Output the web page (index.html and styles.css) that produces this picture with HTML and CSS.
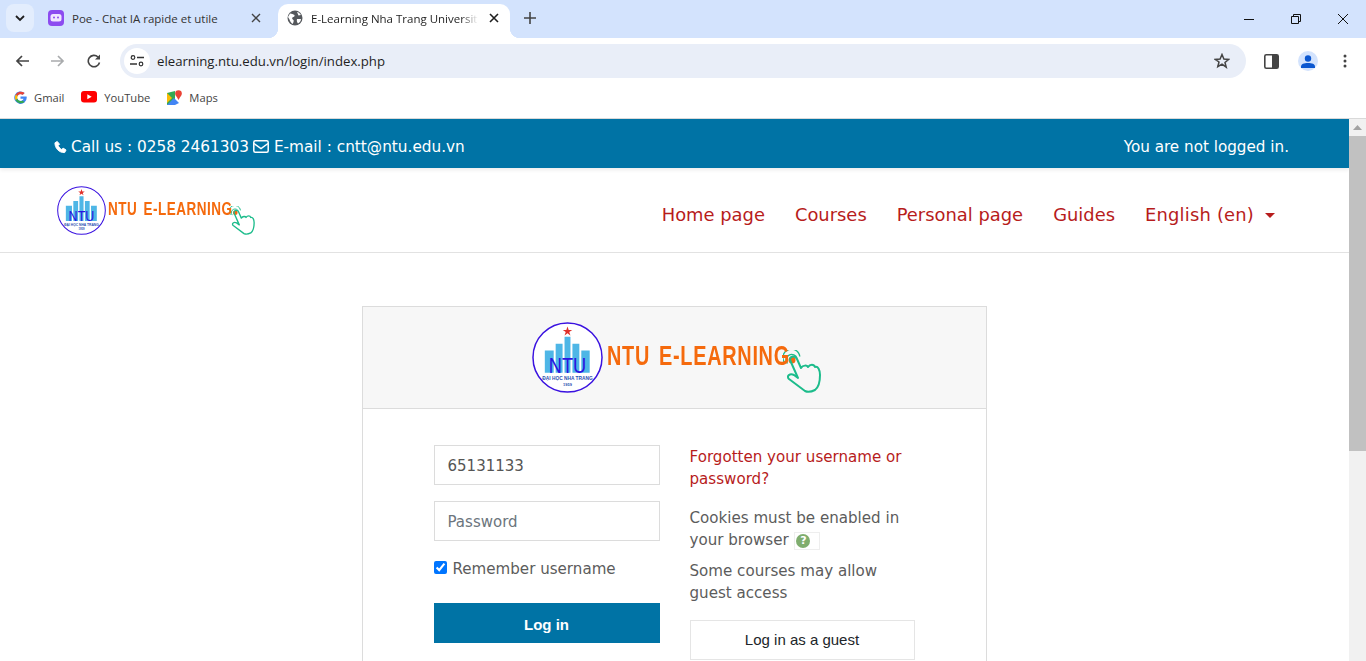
FILE: index.html
```html
<!DOCTYPE html>
<html lang="en">
<head>
    <meta charset="UTF-8">
    <title>E-Learning Nha Trang University</title>
    <link rel="stylesheet" href="styles.css">
</head>
<body>
    <svg width="0" height="0" class="defs">
        <symbol id="hand" viewBox="0 0 38 43">
            <circle cx="9" cy="10" r="3.500" fill="#f26a12" />
            <path d="M4.500 13.500a5.500 5.500 0 1 1 9.500-5M1.800 13a8.500 8.500 0 1 1 15-6.500" fill="none" stroke="#1cbc8b" stroke-width="1.400" />
            <path d="M7 10C7 6 12 5 14 9l4 9c2-3 6-3 7-1 2-3 6-3 7 0 3-1 5 3 5 8 0 8-1 12-5 15-4 2-8 2-10 1L6 29c-3-3 1-6 5-4l4 3z" fill="none" stroke="#1cbc8b" stroke-width="2" stroke-linejoin="round" />
        </symbol>
    </svg>

    <div class="tabstrip">
        <div class="tab-search">
            <svg width="10" height="7" viewBox="0 0 10 7"><path d="M1 1l4 4 4-4" fill="none" stroke="#1f1f1f" stroke-width="1.800" /></svg>
        </div>
        <div class="tab">
            <svg class="favicon" width="16" height="16" viewBox="0 0 16 16">
                <rect width="16" height="16" rx="4" fill="#8c4bf0" />
                <rect x="2.500" y="4" width="11" height="7.500" rx="2.500" fill="#f0e6ff" />
                <circle cx="6" cy="7.500" r="1" fill="#8c4bf0" />
                <circle cx="10" cy="7.500" r="1" fill="#8c4bf0" />
            </svg>
            <span class="tab-title">Poe - Chat IA rapide et utile</span>
            <svg class="tab-close" width="10" height="10" viewBox="0 0 10 10"><path d="M1 1l8 8M9 1l-8 8" stroke="#444" stroke-width="1.400" /></svg>
        </div>
        <div class="tab tab-active">
            <svg class="favicon" width="16" height="16" viewBox="0 0 16 16">
                <circle cx="8" cy="8" r="7.500" fill="#55585c" />
                <path d="M3 3.500c2 0 3 1 4.500 1.500.5 1.500-1 2-2 2.500-1 .5 0 2 1 2.500.5 1 0 2.500-1 4-1.500-1-2.500-3-3-4.500L1 7zM10 9h4c0 2-1.500 3.500-3 4.500-1-1-1.500-3-1-4.500zM10 2c1.500 0 3 1.500 4 3l-2.500.5z" fill="#fff" />
            </svg>
            <span class="tab-title tab-fade">E-Learning Nha Trang University</span>
            <svg class="tab-close" width="10" height="10" viewBox="0 0 10 10"><path d="M1 1l8 8M9 1l-8 8" stroke="#1f1f1f" stroke-width="1.600" /></svg>
        </div>
        <svg class="new-tab" width="12" height="12" viewBox="0 0 12 12"><path d="M6 0v12M0 6h12" stroke="#444" stroke-width="1.600" /></svg>
        <div class="window-btns">
            <svg width="10" height="10" viewBox="0 0 10 10"><path d="M0 5.500h10" stroke="#111" /></svg>
            <svg width="10" height="10" viewBox="0 0 10 10"><path d="M.500 2.500h7v7h-7zM2.500 2.500v-2h7v7h-2" fill="none" stroke="#111" /></svg>
            <svg width="10" height="10" viewBox="0 0 10 10"><path d="M0 0l10 10M10 0L0 10" stroke="#111" /></svg>
        </div>
    </div>

    <div class="toolbar">
        <svg class="nav-icon" width="14" height="12" viewBox="0 0 14 12"><path d="M14 6H2M7 1L2 6l5 5" fill="none" stroke="#444" stroke-width="1.700" /></svg>
        <svg class="nav-icon" width="14" height="12" viewBox="0 0 14 12"><path d="M0 6h12M7 1l5 5-5 5" fill="none" stroke="#a9abad" stroke-width="1.700" /></svg>
        <svg class="nav-icon" width="14" height="14" viewBox="0 0 14 14"><path d="M12.500 8.500A5.700 5.700 0 1 1 11 3" fill="none" stroke="#444" stroke-width="1.600" /><path d="M13 .500v5H8z" fill="#444" /></svg>
        <div class="omnibox">
            <div class="site-info">
                <svg width="14" height="12" viewBox="0 0 14 12"><circle cx="3" cy="2.500" r="1.800" fill="none" stroke="#333" stroke-width="1.200" /><path d="M7 2.500h7M0 9h7" stroke="#333" stroke-width="1.500" /><circle cx="11" cy="9" r="1.800" fill="none" stroke="#333" stroke-width="1.200" /></svg>
            </div>
            <span class="url">elearning.ntu.edu.vn/login/index.php</span>
            <svg class="star" width="16" height="16" viewBox="0 0 16 16"><path d="M8 1.500l1.900 4.500 4.800.4-3.700 3.100 1.200 4.700L8 11.200l-4.200 2.500L5 9 1.300 6.400l4.800-.4z" fill="none" stroke="#444" stroke-width="1.500" /></svg>
        </div>
        <svg class="side-panel" width="15" height="15" viewBox="0 0 15 15"><rect x=".800" y=".800" width="13.400" height="13.400" rx="1.500" fill="#fff" stroke="#444" stroke-width="1.600" /><rect x="8" y="1" width="6" height="13" fill="#444" /></svg>
        <div class="avatar">
            <svg width="14" height="13" viewBox="0 0 14 13"><circle cx="7" cy="3.500" r="3.200" fill="#0b57d0" /><path d="M0 13v-1.500C0 9 3 8 7 8s7 1 7 3.500V13z" fill="#0b57d0" /></svg>
        </div>
        <svg class="menu-dots" width="4" height="14" viewBox="0 0 4 14"><circle cx="2" cy="2" r="1.500" fill="#444" /><circle cx="2" cy="7" r="1.500" fill="#444" /><circle cx="2" cy="12" r="1.500" fill="#444" /></svg>
    </div>

    <div class="bookmarks">
        <span class="bookmark">
            <svg width="13" height="13" viewBox="0 0 48 48"><path d="M44 20H24v9h11c-1.600 5-6 8-11 8a13 13 0 1 1 8.400-23l6.800-6.600A23 23 0 1 0 47 24c0-1.400-.3-2.800-.6-4z" fill="#4285f4" /><path d="M6 13l7.500 5.500A13 13 0 0 1 32.400 14l6.800-6.600A23 23 0 0 0 6 13z" fill="#ea4335" /><path d="M6 13a23 23 0 0 0-.5 21.500L13 29a13 13 0 0 1 .5-10.500z" fill="#fbbc05" /><path d="M5.500 34.500A23 23 0 0 0 39 41l-7-6c-6 4-16 2-19-6z" fill="#34a853" /></svg>
            Gmail
        </span>
        <span class="bookmark">
            <svg width="16" height="12" viewBox="0 0 16 12"><rect width="16" height="11.500" rx="3" fill="#f00" /><path d="M6.300 3.200v5.100L10.700 5.800z" fill="#fff" /></svg>
            YouTube
        </span>
        <span class="bookmark">
            <svg width="15" height="15" viewBox="0 0 15 15"><path d="M0 3l8-2v12l-8 2z" fill="#34a853" /><path d="M0 15l7-7 5 5-4 2z" fill="#4285f4" /><path d="M0 3l5 5-5 5z" fill="#fbbc05" /><circle cx="11.500" cy="3.500" r="3.300" fill="#ea4335" /><path d="M9 5.500h5l-2.500 4.500z" fill="#ea4335" /></svg>
            Maps
        </span>
    </div>

    <div class="viewport">
        <div class="page">
            <div class="topbar">
                <div class="contact">
                    <svg width="13" height="14" viewBox="0 0 14 14"><path d="M3.500 1L1 2.500C.8 8 5.500 13.500 11.500 13l1.500-2.800-3.200-2-1.500 1.500C7 9 5 7 4.500 5.500L6 4z" fill="#fff" stroke="#fff" stroke-linejoin="round" /></svg>
                    <span>Call us : 0258 2461303</span>
                    <svg class="mail-icon" width="16" height="13" viewBox="0 0 16 13"><rect x=".800" y=".800" width="14.400" height="11.400" rx="1.500" fill="none" stroke="#fff" stroke-width="1.500" /><path d="M1 3.500l7 5 7-5" fill="none" stroke="#fff" stroke-width="1.500" /></svg>
                    <span>E-mail : cntt@ntu.edu.vn</span>
                </div>
                <span class="login-state">You are not logged in.</span>
            </div>

            <header class="site-header">
                <div class="logo logo-small">
                    <svg class="seal" viewBox="0 0 72 72">
                        <circle cx="36" cy="36" r="35" fill="#fff" stroke="#3a12e0" stroke-width="1.500" />
                        <path d="M36 4.500l1.200 3.500h3.600l-3 2.200 1.200 3.500-3-2.200-3 2.200 1.200-3.500-3-2.200h3.600z" fill="#e0302a" />
                        <path d="M13 29h9v22.500h-9zM24 22h7v29.500h-7zM33 15h6v36.500h-6zM41 22h7v29.500h-7zM50 29h8.500v22.500H50z" fill="#4eb6e6" />
                        <text x="36" y="51.500" text-anchor="middle" textLength="38" lengthAdjust="spacingAndGlyphs" class="seal-ntu">NTU</text>
                        <text x="36" y="58.500" text-anchor="middle" textLength="51" lengthAdjust="spacingAndGlyphs" class="seal-name">ĐẠI HỌC NHA TRANG</text>
                        <text x="36" y="64.500" text-anchor="middle" class="seal-year">1959</text>
                    </svg>
                    <span class="logo-text">NTU E-LEARNING</span>
                    <svg class="hand"><use href="#hand" /></svg>
                </div>
                <nav class="main-nav">
                    <a href="#">Home page</a>
                    <a href="#">Courses</a>
                    <a href="#">Personal page</a>
                    <a href="#">Guides</a>
                    <a href="#" class="lang">English ‎(en)‎</a>
                </nav>
            </header>

            <main class="login-wrap">
                <div class="login-card">
                    <div class="card-head">
                        <div class="logo logo-big">
                            <svg class="seal" viewBox="0 0 72 72">
                                <circle cx="36" cy="36" r="35" fill="#fff" stroke="#3a12e0" stroke-width="1.500" />
                                <path d="M36 4.500l1.200 3.500h3.600l-3 2.200 1.200 3.500-3-2.200-3 2.200 1.200-3.500-3-2.200h3.600z" fill="#e0302a" />
                                <path d="M13 29h9v22.500h-9zM24 22h7v29.500h-7zM33 15h6v36.500h-6zM41 22h7v29.500h-7zM50 29h8.500v22.500H50z" fill="#4eb6e6" />
                                <text x="36" y="51.500" text-anchor="middle" textLength="38" lengthAdjust="spacingAndGlyphs" class="seal-ntu">NTU</text>
                                <text x="36" y="58.500" text-anchor="middle" textLength="51" lengthAdjust="spacingAndGlyphs" class="seal-name">ĐẠI HỌC NHA TRANG</text>
                                <text x="36" y="64.500" text-anchor="middle" class="seal-year">1959</text>
                            </svg>
                            <span class="logo-text">NTU E-LEARNING</span>
                            <svg class="hand"><use href="#hand" /></svg>
                        </div>
                    </div>
                    <div class="card-body">
                        <form class="login-form">
                            <input type="text" class="field" value="65131133">
                            <input type="password" class="field" placeholder="Password">
                            <label class="remember"><input type="checkbox" checked> Remember username</label>
                            <button type="button" class="btn-login">Log in</button>
                        </form>
                        <div class="login-help">
                            <a href="#" class="forgot">Forgotten your username or password?</a>
                            <p class="cookies">Cookies must be enabled in your browser <span class="help-box"><span class="help-icon">?</span></span></p>
                            <p class="guest-note">Some courses may allow guest access</p>
                            <button type="button" class="btn-guest">Log in as a guest</button>
                        </div>
                    </div>
                </div>
            </main>
        </div>
        <div class="scrollbar">
            <svg width="9" height="5" viewBox="0 0 9 5"><path d="M4.500 0L9 5H0z" fill="#a3a3a3" /></svg>
            <div class="scroll-thumb"></div>
        </div>
    </div>
</body>
</html>
```

FILE: styles.css
```css
html, body {
    margin: 0;
    height: 100%;
    overflow: hidden;
}
body {
    display: flex;
    flex-direction: column;
    height: 661px;
    background-color: #fff;
    font-family: "DejaVu Sans", sans-serif;
    color: #5c5c5c;
}
.defs {
    position: absolute;
}
.seal-ntu {
    font-family: "Liberation Sans", sans-serif;
    font-size: 21.700px;
    fill: #2a12e0;
}
.seal-name {
    font-family: "Liberation Sans", sans-serif;
    font-size: 4.500px;
    font-weight: bold;
    fill: #2b4fb0;
}
.seal-year {
    font-family: "Liberation Sans", sans-serif;
    font-size: 4px;
    font-weight: bold;
    fill: #2b4fb0;
}

/* browser chrome */
.tabstrip {
    height: 38px;
    background-color: #d3e3fd;
    display: flex;
    align-items: flex-end;
    padding-left: 6px;
    font-family: "Open Sans", sans-serif;
    font-size: 11.500px;
    color: #333;
    flex-shrink: 0;
}
.tab-search {
    width: 28px;
    height: 28px;
    margin-bottom: 6px;
    background-color: #e3edfd;
    border-radius: 8px;
    display: flex;
    align-items: center;
    justify-content: center;
}
.tab {
    width: 244px;
    height: 34px;
    display: flex;
    align-items: center;
    padding: 0 0 6px 14px;
    box-sizing: border-box;
    border-radius: 10px 10px 0 0;
}
.tab-active {
    position: relative;
    background-color: #fff;
    width: 232px;
    padding-left: 9px;
    color: #1f1f1f;
}
.tab-active::before,
.tab-active::after {
    content: "";
    position: absolute;
    bottom: 0;
    width: 10px;
    height: 10px;
}
.tab-active::before {
    left: -10px;
    background: radial-gradient(circle at 0 0, transparent 10px, #fff 10.500px);
}
.tab-active::after {
    right: -10px;
    background: radial-gradient(circle at 100% 0, transparent 10px, #fff 10.500px);
}
.favicon {
    flex-shrink: 0;
    margin-right: 8px;
}
.tab-title {
    flex: 1;
    white-space: nowrap;
    overflow: hidden;
}
.tab-fade {
    -webkit-mask-image: linear-gradient(to right, #000 90%, transparent);
    mask-image: linear-gradient(to right, #000 90%, transparent);
}
.tab-close {
    flex-shrink: 0;
    margin-left: 11px;
    margin-right: 17px;
}
.tab-active .tab-close {
    margin-right: 11px;
}
.new-tab {
    margin: 0 0 14px 14px;
}
.window-btns {
    margin-left: auto;
    display: flex;
    gap: 37px;
    margin-bottom: 14px;
    padding-right: 18px;
}
.toolbar {
    height: 42px;
    background-color: #fff;
    border-radius: 10px 10px 0 0;
    display: flex;
    align-items: center;
    padding: 4px 0 0 15px;
    box-sizing: border-box;
    flex-shrink: 0;
}
.nav-icon {
    margin-right: 22px;
    flex-shrink: 0;
}
.nav-icon:nth-child(3) {
    margin-right: 19px;
}
.omnibox {
    width: 1126px;
    height: 34px;
    background-color: #e9eef8;
    border-radius: 17px;
    display: flex;
    align-items: center;
    font-family: "Open Sans", sans-serif;
    font-size: 13.200px;
    color: #1f1f1f;
    padding-left: 4px;
    box-sizing: border-box;
}
.site-info {
    width: 26px;
    height: 26px;
    border-radius: 50%;
    background-color: #fff;
    display: flex;
    align-items: center;
    justify-content: center;
    margin-right: 7px;
}
.star {
    margin-left: auto;
    margin-right: 16px;
}
.side-panel {
    margin-left: 18px;
}
.avatar {
    width: 20px;
    height: 20px;
    border-radius: 50%;
    background-color: #d3e3fd;
    margin-left: 19px;
    display: flex;
    align-items: center;
    justify-content: center;
}
.menu-dots {
    margin-left: 25px;
}
.bookmarks {
    height: 34px;
    border-bottom: 1px solid #d9d9d9;
    display: flex;
    align-items: center;
    gap: 17px;
    padding: 0 0 4px 14px;
    font-family: "Open Sans", sans-serif;
    font-size: 11.200px;
    color: #444;
    flex-shrink: 0;
}
.bookmark {
    display: flex;
    align-items: center;
    gap: 7px;
}

/* page */
.viewport {
    flex: 1;
    display: flex;
    min-height: 0;
}
.page {
    flex: 1;
    overflow: hidden;
}
.scrollbar {
    width: 17px;
    background-color: #f1f1f1;
    display: flex;
    flex-direction: column;
    align-items: center;
    padding-top: 6px;
    box-sizing: border-box;
}
.scroll-thumb {
    width: 100%;
    height: 315px;
    margin-top: 6px;
    background-color: #c1c1c1;
}
.topbar {
    height: 49px;
    background-color: #0073a5;
    color: #fff;
    display: flex;
    align-items: center;
    justify-content: space-between;
    padding: 6px 60px 0 54px;
    box-sizing: border-box;
    font-size: 15.300px;
    box-shadow: 0 2px 4px rgba(0, 0, 0, 0.08);
    position: relative;
}
.contact {
    display: flex;
    align-items: center;
    gap: 4px;
}
.mail-icon {
    margin-right: 1px;
}
.login-state {
    font-size: 15.200px;
}
.site-header {
    height: 84px;
    border-bottom: 1px solid #e2e2e2;
    display: flex;
    align-items: center;
    justify-content: space-between;
    padding: 0 74px 0 57px;
}
.logo {
    display: flex;
    align-items: flex-start;
}
.logo-text {
    font-family: "Liberation Sans", sans-serif;
    font-weight: bold;
    color: #f56a0d;
    white-space: nowrap;
    transform-origin: left center;
    transform: scaleX(0.71);
}
.seal {
    flex-shrink: 0;
}
.logo-small {
    margin-top: 1px;
}
.logo-small .seal {
    width: 49px;
    height: 49px;
}
.logo-small .logo-text {
    width: 125px;
    font-size: 19px;
    letter-spacing: 0.7px;
    word-spacing: 3px;
    margin: 12px 0 0 2px;
}
.logo-small .hand {
    width: 26px;
    height: 29px;
    margin: 20px 0 0 -4px;
}
.logo-big {
    padding-left: 4px;
}
.logo-big .seal {
    width: 71px;
    height: 71px;
}
.logo-big .logo-text {
    width: 183px;
    font-size: 28px;
    letter-spacing: 1px;
    word-spacing: 4px;
    margin: 18px 0 0 4px;
}
.logo-big .hand {
    width: 38px;
    height: 43px;
    margin: 28px 0 0 -7px;
}
.main-nav {
    display: flex;
    gap: 30px;
    font-size: 17.900px;
    margin-top: 8px;
}
.main-nav a {
    color: #b71c1c;
    text-decoration: none;
}
.main-nav .lang {
    letter-spacing: 0.2px;
}
.lang::after {
    content: "";
    display: inline-block;
    border-top: 5px solid #b71c1c;
    border-left: 5px solid transparent;
    border-right: 5px solid transparent;
    margin-left: 11px;
    vertical-align: 3px;
}
.login-wrap {
    display: flex;
    justify-content: center;
    padding: 53px 0 0;
}
.login-card {
    width: 625px;
    margin-left: -1px;
    border: 1px solid #dcdcdc;
    box-sizing: border-box;
}
.card-head {
    height: 102px;
    background-color: #f7f7f7;
    border-bottom: 1px solid #dcdcdc;
    display: flex;
    justify-content: center;
    padding-top: 15px;
    box-sizing: border-box;
}
.card-body {
    display: flex;
    gap: 30px;
    padding: 36px 71px 40px;
    font-size: 15.100px;
    line-height: 22px;
}
.login-form {
    width: 226px;
    display: flex;
    flex-direction: column;
}
.field {
    height: 40px;
    box-sizing: border-box;
    border: 1px solid #dcdcdc;
    padding: 2px 13px 0;
    margin-bottom: 16px;
    font-family: inherit;
    font-size: 15px;
    color: #555;
    outline: none;
}
.field::placeholder {
    color: #6c757d;
}
.remember {
    display: flex;
    align-items: center;
    gap: 6px;
    height: 22px;
    margin-top: 1px;
    margin-bottom: 23px;
}
.remember input {
    margin: 0 0 4px;
    width: 13px;
    height: 13px;
}
.btn-login {
    height: 40px;
    border: none;
    padding-top: 3px;
    background-color: #0073a5;
    color: #fff;
    font-family: "Liberation Sans", sans-serif;
    font-weight: bold;
    font-size: 15px;
}
.login-help {
    width: 225px;
    margin-top: 1px;
}
.forgot {
    color: #b71c1c;
    text-decoration: none;
    display: block;
}
.login-help p {
    margin: 0;
}
.login-help .cookies {
    margin-top: 17px;
}
.login-help .guest-note {
    margin-top: 9px;
}
.help-box {
    display: inline-flex;
    align-items: center;
    width: 26px;
    height: 18px;
    margin-left: 1px;
    border: 1px solid #eee;
    box-sizing: border-box;
    vertical-align: 1px;
    padding-left: 1px;
}
.help-icon {
    width: 14px;
    height: 14px;
    border-radius: 50%;
    background-color: #7fad6e;
    color: #fff;
    font-size: 11px;
    font-weight: bold;
    line-height: 14px;
    text-align: center;
}
.btn-guest {
    display: block;
    width: 225px;
    height: 40px;
    margin-top: 16px;
    padding-bottom: 3px;
    background-color: #fff;
    border: 1px solid #e5e5e5;
    color: #212529;
    font-family: "Liberation Sans", sans-serif;
    font-size: 15px;
}
```
